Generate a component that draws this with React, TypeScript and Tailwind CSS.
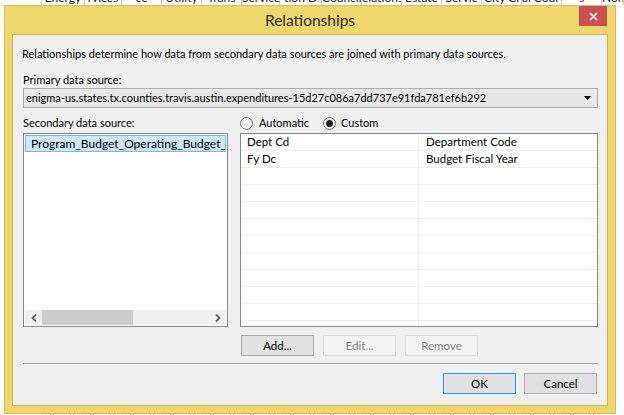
import React from "react";

const headerCells: [number, string][] = [
  [42, ""],
  [43, "Energy"],
  [37, "rvices"],
  [40, "ce"],
  [40, "Utility"],
  [40, "Trans"],
  [38, "Service"],
  [42, "tion D"],
  [40, "Council"],
  [40, "elations"],
  [40, "Estate"],
  [40, "Servic"],
  [40, "City Cl"],
  [40, "al Court"],
  [40, "s"],
  [22, "Non"],
];

const rows: [string, string][] = [
  ["Dept Cd", "Department Code"],
  ["Fy Dc", "Budget Fiscal Year"],
  ["", ""],
  ["", ""],
  ["", ""],
  ["", ""],
  ["", ""],
  ["", ""],
  ["", ""],
  ["", ""],
  ["", ""],
  ["", ""],
];

function Radio({ checked }: { checked?: boolean }) {
  return (
    <div className="w-[13px] h-[13px] shrink-0 rounded-full border border-[#6f6f6f] bg-[#f6f6f6] flex items-center justify-center">
      {checked && <div className="w-[7px] h-[7px] rounded-full bg-[#222]" />}
    </div>
  );
}

function Btn({
  children,
  disabled,
  primary,
}: {
  children: React.ReactNode;
  disabled?: boolean;
  primary?: boolean;
}) {
  const cls = disabled
    ? "bg-[#f4f4f4] border-[#d9d9d9] text-[#838383]"
    : primary
    ? "bg-[#e1e1e1] border-[#3c8fe0] text-black"
    : "bg-[#e1e1e1] border-[#adadad] text-black";
  return (
    <div
      className={`w-[73px] h-[21px] border flex items-center justify-center text-[11.5px] leading-none ${cls}`}
    >
      {children}
    </div>
  );
}

export default function App() {
  return (
    <div className="w-[624px] h-[415px] bg-white overflow-hidden flex flex-col font-['Lato',sans-serif] text-black text-[11px]">
      {/* background spreadsheet header (cut off) */}
      <div className="h-[5px] shrink-0 flex overflow-hidden">
        {headerCells.map(([w, t], i) => (
          <div
            key={i}
            style={{ width: w }}
            className="shrink-0 h-[5px] overflow-hidden border-r border-[#c8c8c8] text-center whitespace-nowrap"
          >
            <div className="-mt-[9px] leading-[14px] text-[12px] text-[#222]">{t}</div>
          </div>
        ))}
      </div>

      <div className="flex h-[409px] shrink-0">
        <div className="w-[4px] shrink-0" />
        {/* window */}
        <div className="w-[612px] h-full shrink-0 bg-[#f0d76c] border border-[#d4bd5c] flex flex-col px-[7px] pb-[7px]">
          {/* title bar */}
          <div className="h-[28px] shrink-0 grid grid-cols-[1fr_auto_1fr]">
            <div />
            <div className="self-center text-[15.5px] leading-[18px] text-[#2b2b2b] -mt-[1px]">
              Relationships
            </div>
            <div className="justify-self-end self-start mr-[1px] w-[28px] h-[20px] bg-[#c75050] flex items-center justify-center">
              <svg width="9" height="9" viewBox="0 0 9 9">
                <path d="M1 1 L8 8 M8 1 L1 8" stroke="#fff" strokeWidth="1.6" />
              </svg>
            </div>
          </div>

          {/* content */}
          <div className="flex-1 bg-[#f0f0f0] border border-[#cbb45a] flex flex-col pl-[10px] pr-[9px]">
            <div className="mt-[11px] leading-[16px] -ml-[1px]">
              Relationships determine how data from secondary data sources are joined with primary data sources.
            </div>
            <div className="mt-[10px] leading-[16px]">Primary data source:</div>
            <div className="h-[20px] border border-[#acacac] bg-[#e9e9e9] flex items-center pl-[2px] pr-[6px]">
              <div className="flex-1 leading-[16px] whitespace-nowrap overflow-hidden">
                enigma-us.states.tx.counties.travis.austin.expenditures-15d27c086a7dd737e91fda781ef6b292
              </div>
              <svg width="7" height="4" viewBox="0 0 7 4">
                <path d="M0 0 H7 L3.5 4 Z" fill="#000" />
              </svg>
            </div>

            <div className="mt-[7px] h-[16px] flex">
              <div className="w-[217px] leading-[16px]">Secondary data source:</div>
              <div className="flex items-center">
                <Radio />
                <span className="ml-[6px] w-[64px] leading-[16px]">Automatic</span>
                <Radio checked />
                <span className="ml-[5px] leading-[16px]">Custom</span>
              </div>
            </div>

            <div className="mt-[2px] h-[194px] flex gap-[12px]">
              {/* secondary listbox */}
              <div className="w-[205px] h-full border border-[#828790] bg-white p-[1px] flex flex-col">
                <div className="flex-1">
                  <div className="h-[17px] border border-[#7eb4ea] bg-[#cde8ff] pl-[5px] leading-[15px] text-[12px] whitespace-nowrap overflow-hidden">
                    Program_Budget_Operating_Budget_
                  </div>
                </div>
                <div className="h-[15px] bg-[#f0f0f0] flex items-center">
                  <div className="w-[17px] h-full flex items-center justify-center">
                    <svg width="6" height="8" viewBox="0 0 6 8">
                      <path d="M5 0.5 L1.5 4 L5 7.5" stroke="#606060" strokeWidth="1.8" fill="none" />
                    </svg>
                  </div>
                  <div className="w-[91px] h-full bg-[#cdcdcd]" />
                  <div className="flex-1" />
                  <div className="w-[17px] h-full flex items-center justify-center">
                    <svg width="6" height="8" viewBox="0 0 6 8">
                      <path d="M1 0.5 L4.5 4 L1 7.5" stroke="#606060" strokeWidth="1.8" fill="none" />
                    </svg>
                  </div>
                </div>
              </div>

              {/* grid */}
              <div className="w-[358px] h-full border border-[#828790] bg-white overflow-hidden text-[11.5px]">
                {rows.map((r, i) => (
                  <div key={i} className="h-[17px] flex border-b border-[#f0f0f0]">
                    <div className="w-[178px] border-r border-[#f0f0f0] pl-[6px] leading-[16px] whitespace-nowrap">
                      {r[0]}
                    </div>
                    <div className="flex-1 pl-[7px] leading-[16px] whitespace-nowrap">{r[1]}</div>
                  </div>
                ))}
              </div>
            </div>

            <div className="mt-[8px] flex gap-[9px] pl-[218px]">
              <Btn>Add...</Btn>
              <Btn disabled>Edit...</Btn>
              <Btn disabled>Remove</Btn>
            </div>

            <div className="mt-[7px] h-[1px] bg-[#a0a0a0]" />

            <div className="mt-[9px] flex justify-end gap-[8px] pr-[1px]">
              <Btn primary>OK</Btn>
              <Btn>Cancel</Btn>
            </div>
          </div>
        </div>
        <div className="flex-1" />
      </div>

      {/* bottom background fragment */}
      <div className="h-[1px] shrink-0 flex pl-[42px]">
        {Array.from({ length: 14 }).map((_, i) => (
          <div key={i} className="w-[40px] h-[1px] flex shrink-0">
            <div className="w-[1px] bg-[#d0d0d0]" />
            <div className="w-[7px]" />
            <div className="w-[1px] bg-[#8080d0]" />
            <div className="w-[2px]" />
            <div className="w-[1px] bg-[#a070c0]" />
            <div className="w-[16px]" />
            <div className="w-[1px] bg-[#8080d0]" />
            <div className="w-[2px]" />
            <div className="w-[1px] bg-[#a070c0]" />
          </div>
        ))}
      </div>
    </div>
  );
}
